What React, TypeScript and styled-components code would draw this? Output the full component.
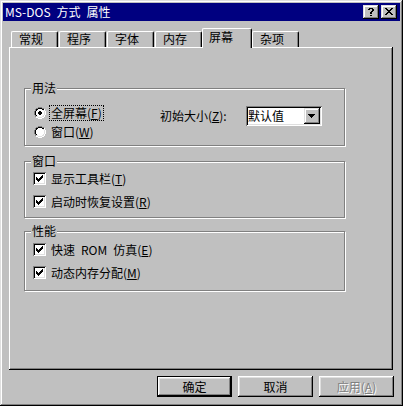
import React from 'react';
import styled, { createGlobalStyle, css } from 'styled-components';

const Global = createGlobalStyle`
  html, body { margin: 0; padding: 0; background: #c0c0c0; }
  body { font-family: "Noto Sans CJK SC", "Noto Sans", sans-serif; font-size: 12px; }
  #root { width: 403px; height: 406px; }
`;

const FONT = `"Noto Sans CJK SC", "Noto Sans", sans-serif`;

const Window = styled.div`
  width: 403px;
  height: 406px;
  box-sizing: border-box;
  padding: 3px;
  background: #c0c0c0;
  box-shadow: inset -1px -1px #000, inset 1px 1px #dfdfdf, inset -2px -2px #808080, inset 2px 2px #fff;
  display: flex;
  flex-direction: column;
  font-family: ${FONT};
  font-size: 12px;
  color: #000;
`;

const TitleBar = styled.div`
  height: 18px;
  flex: none;
  background: #000080;
  color: #fff;
  display: flex;
  align-items: center;
  padding: 0 3px 0 2px;
  gap: 2px;
`;

const Title = styled.span`
  flex: 1;
  line-height: 12px;
  white-space: pre;
`;

const CapButton = styled.div`
  width: 16px;
  height: 14px;
  box-sizing: border-box;
  background: #c0c0c0;
  box-shadow: inset -1px -1px #000, inset 1px 1px #dfdfdf, inset -2px -2px #808080, inset 2px 2px #fff;
  display: flex;
  align-items: center;
  justify-content: center;
  padding: 0 1px 1px 0;
`;

const Body = styled.div`
  flex: 1;
  display: flex;
  flex-direction: column;
  padding: 7px 7px 0 6px;
`;

const TabRow = styled.div`
  display: flex;
  align-items: flex-end;
  height: 19px;
  padding-left: 2px;
  position: relative;
  z-index: 1;
`;

const Tab = styled.div<{ $active?: boolean }>`
  box-sizing: border-box;
  width: 47px;
  height: 16px;
  margin-right: 1px;
  border-top: 1px solid #fff;
  border-left: 1px solid #fff;
  border-right: 1px solid #000;
  border-radius: 2px 2px 0 0;
  box-shadow: inset -1px 0 #808080;
  background: #c0c0c0;
  padding: 1px 0 0 7px;
  line-height: 12px;
  white-space: nowrap;
  ${(p) =>
    p.$active &&
    css`
      width: 50px;
      height: 20px;
      margin-left: -1px;
      margin-right: 0;
      margin-bottom: -1px;
      padding: 2px 0 0 6px;
    `}
`;

const Panel = styled.div`
  height: 323px;
  box-sizing: border-box;
  box-shadow: inset -1px -1px #000, inset 1px 1px #fff, inset -2px -2px #808080;
  padding: 41px 0 0 15px;
  display: flex;
  flex-direction: column;
`;

const Group = styled.div<{ $h: number; $pt: number; $pl: number; $mt?: number }>`
  position: relative;
  box-sizing: border-box;
  width: 321px;
  height: ${(p) => p.$h}px;
  margin-top: ${(p) => p.$mt ?? 0}px;
  border: 1px solid #808080;
  box-shadow: inset 1px 1px #fff, 1px 1px #fff;
  padding: ${(p) => p.$pt}px 0 0 ${(p) => p.$pl}px;
`;

const Legend = styled.span`
  position: absolute;
  top: -7px;
  left: 6px;
  padding: 0 1px;
  background: #c0c0c0;
  line-height: 12px;
`;

const GroupInner = styled.div`
  display: flex;
  align-items: flex-start;
`;

const RadioCol = styled.div`
  width: 126px;
  display: flex;
  flex-direction: column;
`;

const OptRow = styled.div<{ $h: number }>`
  display: flex;
  align-items: center;
  height: ${(p) => p.$h}px;
`;

const Label = styled.span<{ $focus?: boolean }>`
  margin-left: 3px;
  border: 1px ${(p) => (p.$focus ? 'dotted #000' : 'solid transparent')};
  padding: 0 1px;
  line-height: 14px;
  white-space: pre;
`;

const Mn = styled.span`
  text-decoration: underline;
  text-underline-offset: 1px;
`;

const SizeField = styled.div`
  display: flex;
  align-items: center;
  margin-top: 3px;
  height: 20px;
`;

const SizeLabel = styled.span`
  width: 86px;
  line-height: 14px;
  white-space: pre;
`;

const Combo = styled.div`
  width: 76px;
  height: 20px;
  box-sizing: border-box;
  background: #fff;
  box-shadow: inset 1px 1px #808080, inset -1px -1px #fff, inset 2px 2px #000, inset -2px -2px #dfdfdf;
  padding: 2px;
  display: flex;
  align-items: center;
`;

const ComboText = styled.span`
  flex: 1;
  line-height: 14px;
`;

const ComboButton = styled.div`
  width: 16px;
  height: 16px;
  box-sizing: border-box;
  background: #c0c0c0;
  box-shadow: inset -1px -1px #000, inset 1px 1px #dfdfdf, inset -2px -2px #808080, inset 2px 2px #fff;
  display: flex;
  align-items: center;
  justify-content: center;
  padding: 0 1px 1px 0;
`;

const CheckBox = styled.span`
  width: 13px;
  height: 13px;
  flex: none;
  box-sizing: border-box;
  background: #fff;
  box-shadow: inset 1px 1px #808080, inset -1px -1px #fff, inset 2px 2px #000, inset -2px -2px #dfdfdf;
  display: flex;
  align-items: center;
  justify-content: center;
`;

const Footer = styled.div`
  display: flex;
  justify-content: flex-end;
  gap: 6px;
  padding-top: 6px;
  margin-right: -1px;
`;

const Button = styled.div<{ $default?: boolean; $disabled?: boolean }>`
  width: 75px;
  height: 21px;
  box-sizing: border-box;
  background: #c0c0c0;
  display: flex;
  align-items: center;
  justify-content: center;
  line-height: 12px;
  box-shadow: inset -1px -1px #000, inset 1px 1px #fff, inset -2px -2px #808080, inset 2px 2px #dfdfdf;
  ${(p) =>
    p.$default &&
    css`
      border: 1px solid #000;
    `}
  ${(p) =>
    p.$disabled &&
    css`
      color: #808080;
      text-shadow: 1px 1px #fff;
    `}
`;

const PixSvg = styled.svg`
  display: block;
  flex: none;
`;

const Pixel: React.FC<{ rows: string[]; palette: Record<string, string> }> = ({ rows, palette }) => {
  const w = rows[0].length;
  const h = rows.length;
  const rects: React.ReactElement[] = [];
  rows.forEach((r, y) =>
    r.split('').forEach((c, x) => {
      const col = palette[c];
      if (col) rects.push(<rect key={`${x}-${y}`} x={x} y={y} width={1} height={1} fill={col} />);
    })
  );
  return (
    <PixSvg width={w} height={h} viewBox={`0 0 ${w} ${h}`} shapeRendering="crispEdges">
      {rects}
    </PixSvg>
  );
};

const PAL = { K: '#000', G: '#808080', W: '#fff', D: '#dfdfdf' };

const RADIO = [
  '....GGGG....',
  '..GGKKKKGG..',
  '.GKKWWWWKKW.',
  '.GKWWWWWWDW.',
  'GKWWWWWWWWDW',
  'GKWWWWWWWWDW',
  'GKWWWWWWWWDW',
  'GKWWWWWWWWDW',
  '.GKWWWWWWDW.',
  '.GDDWWWWDDW.',
  '..WWDDDDWW..',
  '....WWWW....',
];

const radioRows = (on: boolean) =>
  RADIO.map((r, y) => {
    if (!on) return r;
    const dot: Record<number, number[]> = { 4: [5, 6], 5: [4, 5, 6, 7], 6: [4, 5, 6, 7], 7: [5, 6] };
    if (!dot[y]) return r;
    return r
      .split('')
      .map((c, x) => (dot[y].includes(x) ? 'K' : c))
      .join('');
  });

const CHECK = ['......K', '.....KK', 'K...KKK', 'KK.KKK.', 'KKKKK..', '.KKK...', '..K....'];
const CLOSE = ['KK....KK', '.KK..KK.', '..KKKK..', '...KK...', '..KKKK..', '.KK..KK.', 'KK....KK'];
const HELP = ['.KKKK.', 'KK..KK', '....KK', '...KK.', '..KK..', '..KK..', '......', '..KK..'];
const ARROW = ['KKKKKKK', '.KKKKK.', '..KKK..', '...K...'];

const Radio: React.FC<{ on?: boolean }> = ({ on }) => <Pixel rows={radioRows(!!on)} palette={PAL} />;

const Check: React.FC = () => (
  <CheckBox>
    <Pixel rows={CHECK} palette={PAL} />
  </CheckBox>
);

const tabs = ['常规', '程序', '字体', '内存', '屏幕', '杂项'];

export default function App() {
  return (
    <>
      <Global />
      <Window>
        <TitleBar>
          <Title>{'MS-DOS\u2002方式\u2002属性'}</Title>
          <CapButton>
            <Pixel rows={HELP} palette={PAL} />
          </CapButton>
          <CapButton>
            <Pixel rows={CLOSE} palette={PAL} />
          </CapButton>
        </TitleBar>
        <Body>
          <TabRow>
            {tabs.map((t) => (
              <Tab key={t} $active={t === '屏幕'}>
                {t}
              </Tab>
            ))}
          </TabRow>
          <Panel>
            <Group $h={58} $pt={14} $pl={9}>
              <Legend>用法</Legend>
              <GroupInner>
                <RadioCol>
                  <OptRow $h={19}>
                    <Radio on />
                    <Label $focus>
                      全屏幕(<Mn>F</Mn>)
                    </Label>
                  </OptRow>
                  <OptRow $h={19}>
                    <Radio />
                    <Label>
                      窗口(<Mn>W</Mn>)
                    </Label>
                  </OptRow>
                </RadioCol>
                <SizeField>
                  <SizeLabel>
                    初始大小(<Mn>Z</Mn>):
                  </SizeLabel>
                  <Combo>
                    <ComboText>默认值</ComboText>
                    <ComboButton>
                      <Pixel rows={ARROW} palette={PAL} />
                    </ComboButton>
                  </Combo>
                </SizeField>
              </GroupInner>
            </Group>
            <Group $h={57} $pt={5} $pl={8} $mt={15}>
              <Legend>窗口</Legend>
              <OptRow $h={23}>
                <Check />
                <Label>
                  显示工具栏(<Mn>T</Mn>)
                </Label>
              </OptRow>
              <OptRow $h={23}>
                <Check />
                <Label>
                  启动时恢复设置(<Mn>R</Mn>)
                </Label>
              </OptRow>
            </Group>
            <Group $h={60} $pt={6} $pl={8} $mt={13}>
              <Legend>性能</Legend>
              <OptRow $h={23}>
                <Check />
                <Label>
                  {'快速\u2002ROM\u2002仿真'}(<Mn>E</Mn>)
                </Label>
              </OptRow>
              <OptRow $h={23}>
                <Check />
                <Label>
                  动态内存分配(<Mn>M</Mn>)
                </Label>
              </OptRow>
            </Group>
          </Panel>
          <Footer>
            <Button $default>确定</Button>
            <Button>取消</Button>
            <Button $disabled>
              应用(<Mn>A</Mn>)
            </Button>
          </Footer>
        </Body>
      </Window>
    </>
  );
}
